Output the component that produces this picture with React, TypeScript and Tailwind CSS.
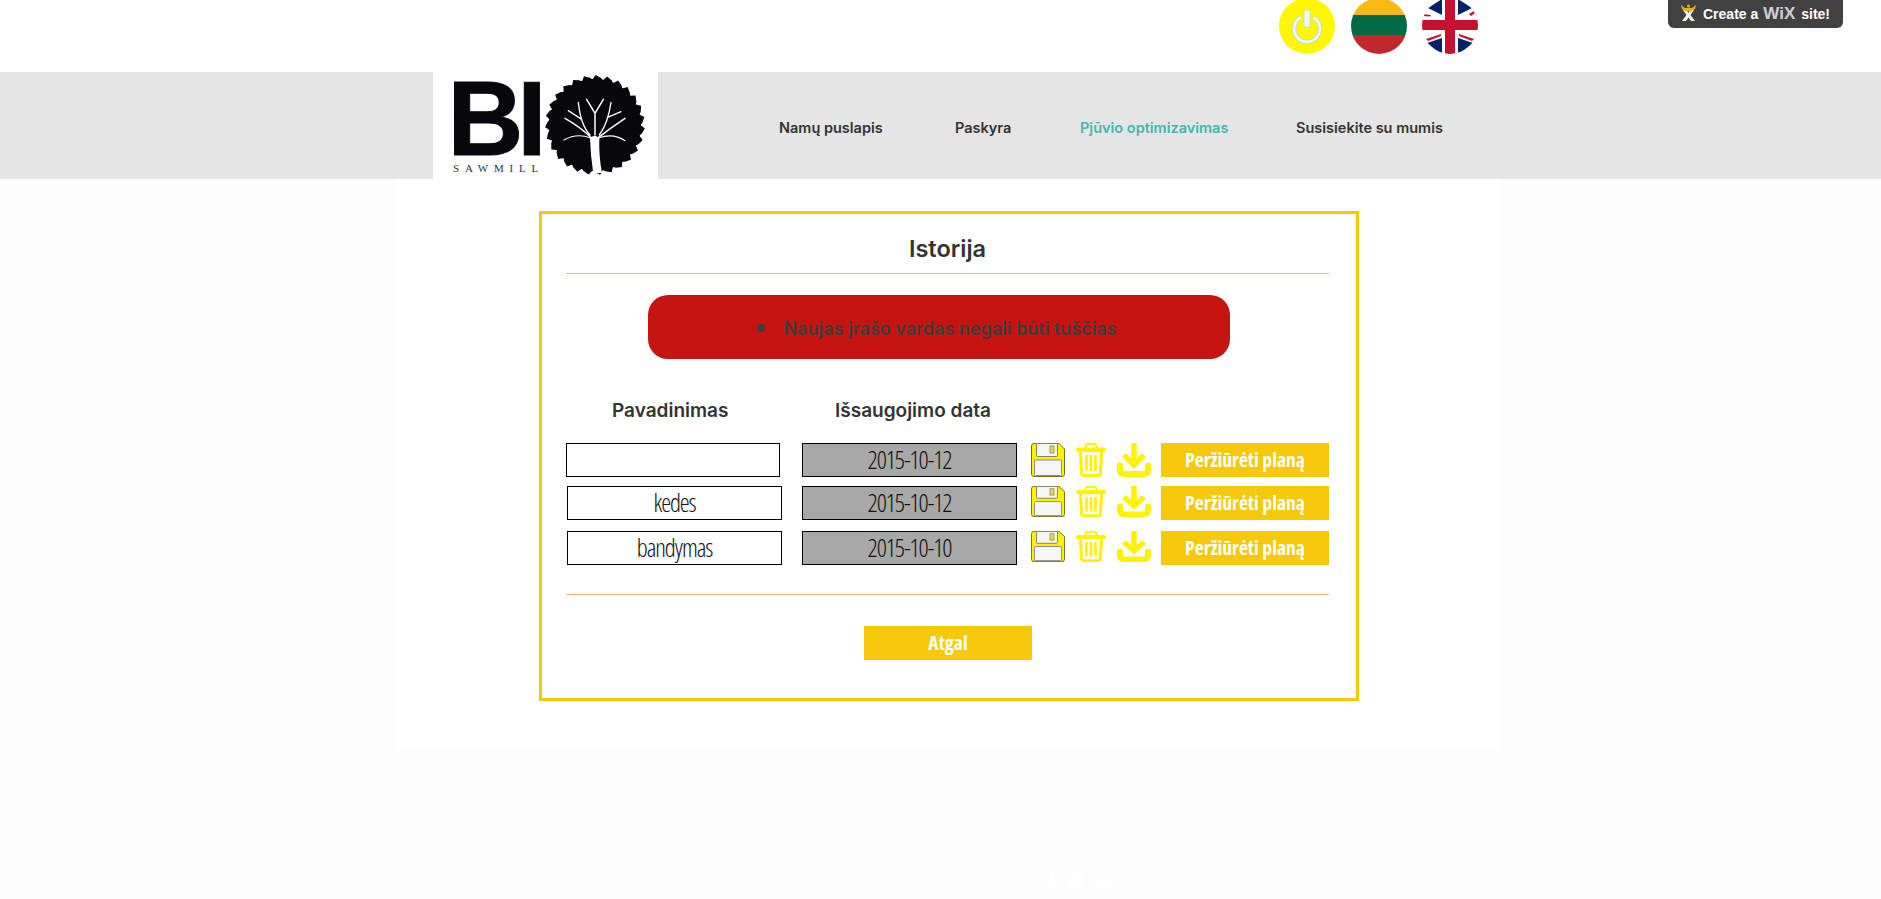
const teeth = Array.from({ length: 27 }, (_, i) => {
  const p = (r: number, t: number) => {
    const a = (t / 27) * Math.PI * 2;
    return `${(162 + r * Math.cos(a)).toFixed(1)},${(53 + r * Math.sin(a)).toFixed(1)}`;
  };
  return `${p(45.5, i)} ${p(50, i + 0.3)} ${p(47.5, i + 0.8)}`;
}).join(' ');

function Logo() {
  return (
    <svg width="225" height="107" viewBox="0 0 225 107" className="block">
      <text x="14.5" y="83" fontFamily="Liberation Sans" fontWeight="700" fontSize="105" letterSpacing="-6" fill="#07070c" stroke="#07070c" strokeWidth="1">BI</text>
      <text x="20" y="100" fontFamily="Liberation Serif" fontSize="11" letterSpacing="5.8" fill="#333">SAWMILL</text>
      <polygon points={teeth} fill="#07070c" />
      <circle cx="162" cy="53" r="46" fill="#07070c" />
      {/* tree, drawn in 3x coordinates */}
      <g transform="translate(107 -2) scale(0.3333)">
        <path d="M150 205 Q152 260 160 312 L186 308 Q176 260 178 205 Q164 190 150 205Z" fill="#fff" />
        <g stroke="#fff" strokeWidth="4.5" fill="none" strokeLinecap="round">
          <path d="M165 195 V130 M165 130 L140 88 M165 130 L190 88" />
          <path d="M150 195 Q122 165 115 97 M125 148 L85 122" strokeWidth="4" />
          <path d="M156 205 Q120 170 75 145" />
          <path d="M152 204 Q110 188 72 210" strokeWidth="3.5" />
          <path d="M178 195 Q204 160 213 97 M203 142 L243 125" strokeWidth="4" />
          <path d="M172 205 Q210 175 255 145" />
          <path d="M176 204 Q220 188 255 212" strokeWidth="3.5" />
        </g>
      </g>
    </svg>
  );
}

function SaveIcon({ h }: { h: number }) {
  return (
    <svg width="34" height={h} viewBox="0 0 34 34" preserveAspectRatio="none" className="block">
      <path d="M.5 3 Q.5 .5 3 .5 H28 L33.5 6 V31 Q33.5 33.5 31 33.5 H3 Q.5 33.5 .5 31Z" fill="#fff200" stroke="#77701c" />
      <rect x="5.5" y="0.5" width="21" height="13" rx="1" fill="#f5f5f5" stroke="#85815a" />
      <rect x="19" y="3" width="4" height="7" fill="#e9dc3c" stroke="#8a8a6a" strokeWidth=".8" />
      <rect x="3.5" y="17" width="27" height="15.5" rx="1" fill="#f5f5f5" stroke="#8a8a8a" />
    </svg>
  );
}

function TrashIcon({ h }: { h: number }) {
  return (
    <svg width="30" height={h} viewBox="0 0 30 34" preserveAspectRatio="none" className="block">
      <path d="M9.5 5 V3.5 Q9.5 1 12 1 H18 Q20.5 1 20.5 3.5 V5" fill="none" stroke="#fff200" strokeWidth="2" />
      <rect x="0" y="4.5" width="30" height="4.5" rx="2.2" fill="#fff200" />
      <path d="M4.5 9 L5.5 30 Q5.5 32.5 8 32.5 H22 Q24.5 32.5 24.5 30 L25.5 9" fill="none" stroke="#fff200" strokeWidth="3" />
      <path d="M10.5 12 V28 M15 12 V28 M19.5 12 V28" stroke="#fff200" strokeWidth="2.6" />
    </svg>
  );
}

function DownloadIcon({ h }: { h: number }) {
  return (
    <svg width="34" height={h} viewBox="0 0 34 34" preserveAspectRatio="none" className="block">
      <path d="M17 0 V20 M7 12 L17 22 L27 12" fill="none" stroke="#fff200" strokeWidth="5.5" />
      <path d="M3 22.5 V27 Q3 31 7 31 H27 Q31 31 31 27 V22.5" fill="none" stroke="#fff200" strokeWidth="6" strokeLinecap="round" />
    </svg>
  );
}

function PowerIcon() {
  return (
    <svg width="56" height="56" viewBox="0 0 56 56" className="block">
      <circle cx="28" cy="27" r="28" fill="#fff700" />
      <path d="M21.5 18.5 A13 13 0 1 0 34.5 18.5" fill="none" stroke="#b9dcd8" strokeWidth="4.4" />
      <path d="M21.5 18.5 A13 13 0 1 0 34.5 18.5" fill="none" stroke="#f4f8ee" strokeWidth="2.6" />
      <rect x="25" y="11" width="6" height="17" rx="1.5" fill="#f4f8ee" stroke="#b9dcd8" strokeWidth=".8" />
    </svg>
  );
}

function LtFlag() {
  return (
    <svg width="56" height="56" viewBox="0 0 56 56" className="block">
      <clipPath id="lt"><circle cx="28" cy="27" r="28" /></clipPath>
      <g clipPath="url(#lt)">
        <rect width="56" height="16" fill="#fdb913" />
        <rect y="16" width="56" height="20" fill="#006a44" />
        <rect y="36" width="56" height="20" fill="#c1272d" />
      </g>
    </svg>
  );
}

function UkFlag() {
  return (
    <svg width="56" height="56" viewBox="0 0 56 56" className="block">
      <clipPath id="uk"><circle cx="28" cy="27" r="28" /></clipPath>
      <g clipPath="url(#uk)">
        <rect width="56" height="56" fill="#fff" />
        <path d="M6 9 L20 0 V16Z M36 0 L50 9 L36 16Z M5 44 L20 39 V56Z M36 39 L51 44 L36 56Z" fill="#012169" />
        <path d="M0 15 L9 16 L8 17.5 L0 17Z M47 15 L55 10 L56 12 L49 17Z M4 40 L19 35 L19 37 L6 42Z M37 35 L52 40 L50 42 L37 37Z" fill="#c8102e" />
        <rect x="23" width="10" height="56" fill="#c8102e" />
        <rect y="21" width="56" height="10" fill="#c8102e" />
      </g>
    </svg>
  );
}

function WixBadge() {
  return (
    <div className="absolute right-[38px] top-0 flex h-[28px] w-[175px] items-center rounded-b-[6px] bg-[#414141] pl-[12px] font-['Liberation_Sans',sans-serif] text-[14px] font-bold text-white">
      <svg width="17" height="17" viewBox="0 0 17 17" className="mr-[6px] shrink-0 -translate-y-[2px]">
        <path d="M3 6 L6.5 6 L8.5 9 L10.5 6 L14 6 L10.5 11 L15 17 H11 L8.5 13.5 L6 17 H2 L6.5 11Z" fill="#f5f5f0" />
        <circle cx="8.5" cy="2" r="1.6" fill="#e4ad20" />
        <path d="M1 1 L5 4 H12 L16 1 L15 5 L11 7.5 H6 L2 5Z" fill="#e4ad20" />
      </svg>
      <span>Create a</span>
      <span className="ml-[5px] text-[17px] text-[#cfcfcf]">WiX</span>
      <span className="ml-[6px]">site!</span>
    </div>
  );
}

const navItems = [
  { label: 'Namų puslapis', width: 'w-[176px]', active: false },
  { label: 'Paskyra', width: 'w-[125px]', active: false },
  { label: 'Pjūvio optimizavimas', width: 'w-[216px]', active: true },
  { label: 'Susisiekite su mumis', width: 'w-[146px]', active: false },
];

const rows = [
  { name: '', date: '2015-10-12', nameBox: 'w-[214px]', mt: 'mt-0', iconH: 34 },
  { name: 'kedes', date: '2015-10-12', nameBox: 'ml-px w-[215px]', mt: 'mt-[9px]', iconH: 31 },
  { name: 'bandymas', date: '2015-10-10', nameBox: 'ml-px w-[215px]', mt: 'mt-[11px]', iconH: 31 },
];

const condensed = "font-['Open_Sans',sans-serif] font-stretch-condensed";
const fieldText = 'text-[25px] font-light tracking-[-1.1px] text-[#111]';

function Row({ name, date, nameBox, mt, iconH }: { name: string; date: string; nameBox: string; mt: string; iconH: number }) {
  return (
    <div className={`flex h-[34px] items-start ${mt}`}>
      <div className="w-[236px] shrink-0">
        <div className={`flex h-[34px] items-center justify-center border border-black bg-white ${nameBox} ${fieldText} ${condensed}`}>
          {name}
        </div>
      </div>
      <div className={`flex h-[34px] w-[215px] shrink-0 items-center justify-center border border-black bg-[#a8a8a8] ${fieldText} ${condensed}`}>
        {date}
      </div>
      <div className="ml-[14px] flex w-[120px] shrink-0 items-start gap-[11px]">
        <SaveIcon h={iconH} />
        <TrashIcon h={iconH} />
        <DownloadIcon h={iconH} />
      </div>
      <button className={`ml-[10px] h-[34px] w-[168px] shrink-0 bg-[#f7c90d] text-[19.6px] font-bold text-white ${condensed}`}>
        Peržiūrėti planą
      </button>
    </div>
  );
}

export default function App() {
  return (
    <div className="relative h-[899px] overflow-hidden bg-[#fdfdfd] font-['Inter',sans-serif] text-[#333]">
      <WixBadge />
      {/* Top icons */}
      <div className="flex h-[72px] items-start gap-[16px] bg-white pl-[1279px]">
        <div className="-mt-px"><PowerIcon /></div>
        <div className="-mt-px"><LtFlag /></div>
        <div className="-mt-px -ml-px"><UkFlag /></div>
      </div>

      {/* Header */}
      <div className="flex h-[107px] bg-[#e5e5e5] pl-[433px]">
        <div className="h-[107px] w-[225px] bg-white"><Logo /></div>
        <nav className="ml-[121px] flex items-center pt-[4px] text-[14.5px] font-semibold whitespace-nowrap">
          {navItems.map((item) => (
            <span key={item.label} className={`${item.width} ${item.active ? 'text-[#3fb8af]' : 'text-[#333]'}`}>
              {item.label}
            </span>
          ))}
        </nav>
      </div>

      {/* Content */}
      <div className="ml-[397px] h-[571px] w-[1103px] bg-white pl-[142px] pt-[32px]">
        <div className="h-[490px] w-[820px] border-[3px] border-[#f7c90d] pl-[24px] pr-[27px]">
          <h1 className="h-[60px] border-b border-[#e8b98a] pt-[20px] text-center text-[23.5px] leading-[30px] font-semibold">Istorija</h1>
          <div className="ml-[82px] mt-[21px] flex h-[64px] w-[582px] items-center justify-center rounded-[20px] bg-[#c61411] pr-[4px] pt-[2px] text-[18px] font-semibold text-[#3d3d3d]">
            <span className="mr-[18px] h-[8px] w-[8px] rounded-full bg-[#3d3d3d]" />
            Naujas įrašo vardas negali būti tuščias
          </div>
          <div className="mt-[36px] flex h-[30px] items-center pt-[2px] text-[19px] font-semibold whitespace-nowrap">
            <span className="w-[269px] pl-[46px]">Pavadinimas</span>
            <span>Išsaugojimo data</span>
          </div>
          <div className="mt-[18px]">
            {rows.map((row) => (
              <Row key={row.name + row.date} {...row} />
            ))}
          </div>
          <div className="mt-[29px] border-t border-[#e8b98a]" />
          <button className={`ml-[298px] mt-[31px] block h-[34px] w-[168px] bg-[#f7c90d] text-[19.6px] font-bold text-white ${condensed}`}>
            Atgal
          </button>
        </div>
      </div>

      {/* Footer social icons, almost invisible on the page */}
      <div className="absolute bottom-[2px] left-[1047px] flex items-center gap-[12px] text-[20px] font-bold text-white">
        <span>f</span>
        <svg width="18" height="15" viewBox="0 0 24 20">
          <path d="M24 2.4c-.9.4-1.8.7-2.8.8 1-.6 1.8-1.6 2.2-2.7-1 .6-2 1-3.1 1.2A4.9 4.9 0 0 0 11.9 6 14 14 0 0 1 1.7 .9a4.9 4.9 0 0 0 1.5 6.6c-.8 0-1.6-.2-2.2-.6 0 2.4 1.7 4.4 3.9 4.9-.7.2-1.5.2-2.2.1.6 2 2.4 3.4 4.6 3.4A9.9 9.9 0 0 1 0 17.3 14 14 0 0 0 21.5 5c1-.7 1.8-1.6 2.5-2.6z" fill="#fff" />
        </svg>
        <span className="text-[15px]">G+</span>
      </div>
    </div>
  );
}
